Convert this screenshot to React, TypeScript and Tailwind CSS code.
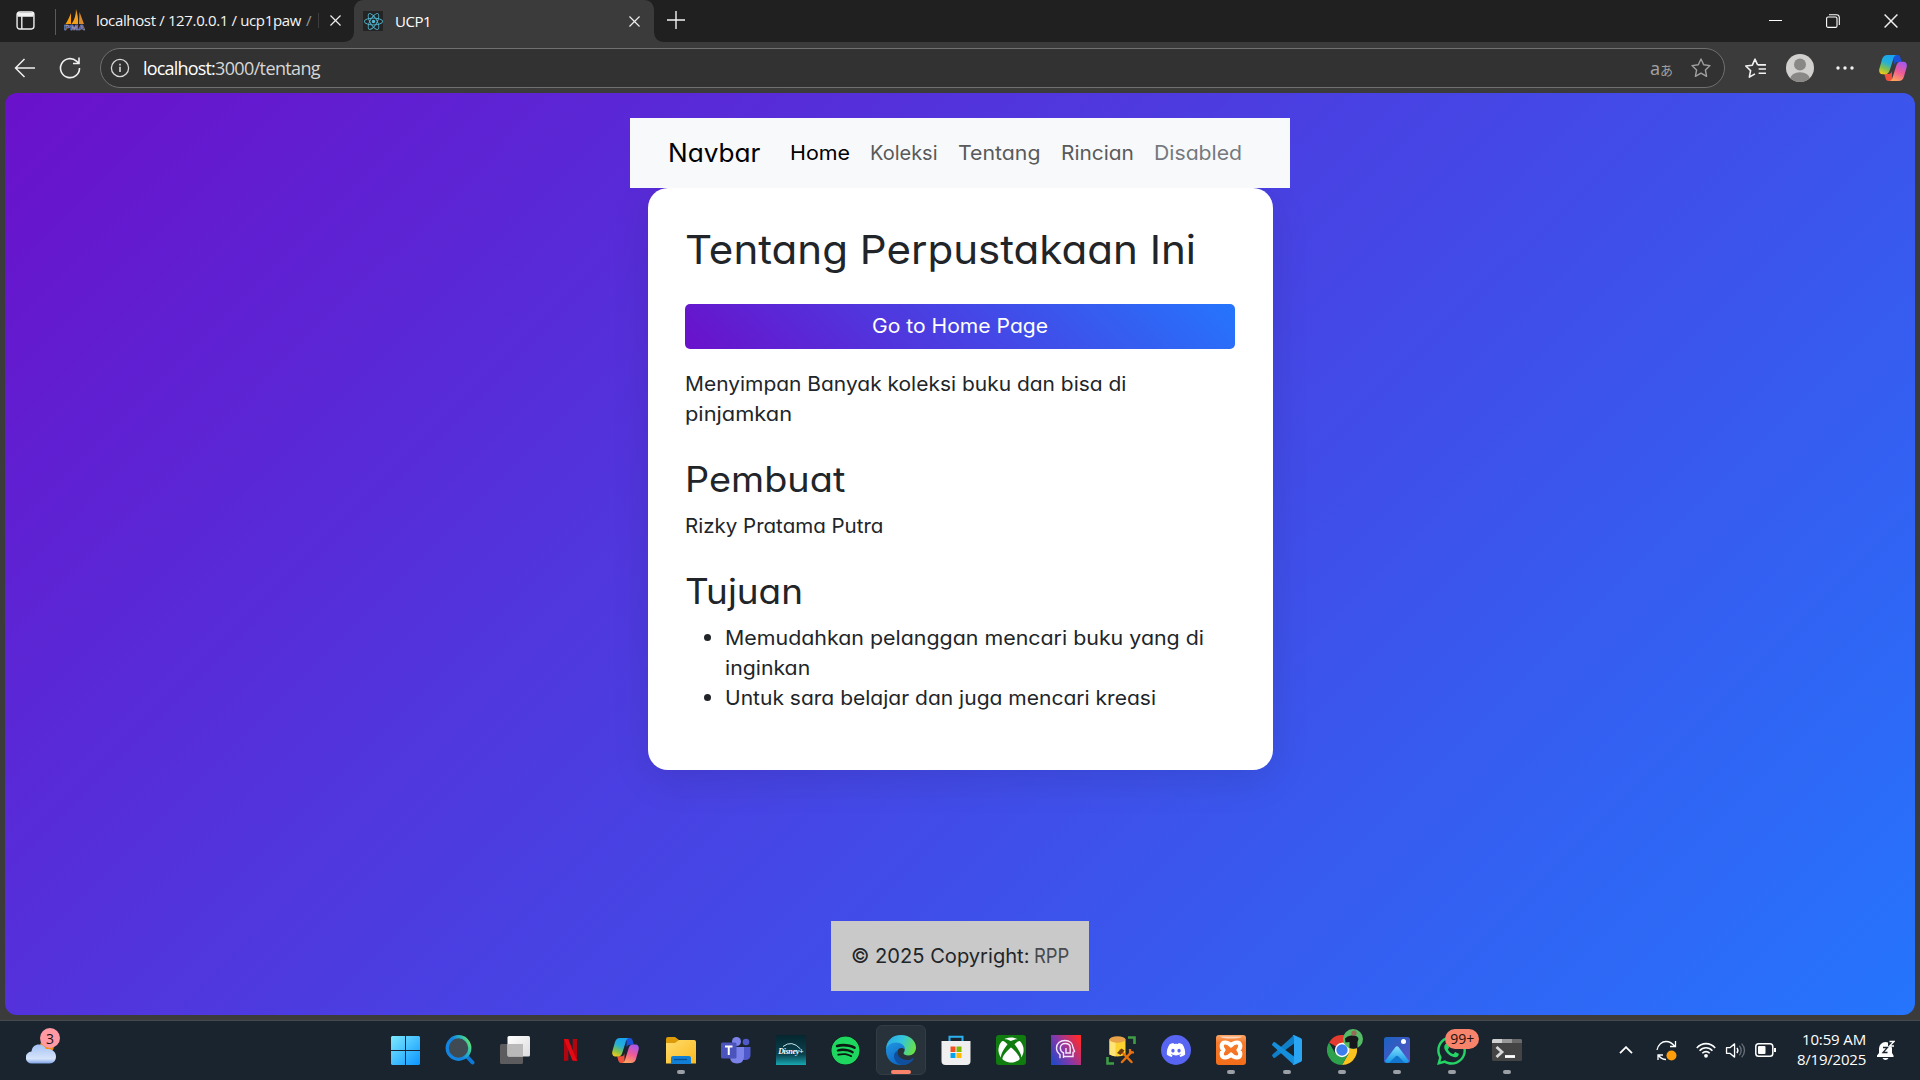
import { useLayoutEffect, useRef, useState } from "react";
import type { ReactNode } from "react";
import { FaDiscord, FaReact, FaSpotify, FaWhatsapp, FaXbox } from "react-icons/fa";

/* One line of text, tracked so that it fills exactly `width` pixels. */
function Line({ width, className = "", children }: { width: number; className?: string; children: string }) {
  const ref = useRef<HTMLSpanElement>(null);
  const [tracking, setTracking] = useState(0);
  useLayoutEffect(() => {
    if (!ref.current) return;
    const natural = ref.current.getBoundingClientRect().width - tracking * children.length;
    setTracking((width - natural) / children.length);
  }, [width, children]);
  return (
    <span ref={ref} style={{ letterSpacing: tracking }} className={`inline-block whitespace-pre ${className}`}>
      {children}
    </span>
  );
}

/* One line of page text, its letters widened so that it fills exactly `width` pixels. */
function Wide({ width, className = "", children }: { width: number; className?: string; children: string }) {
  const ref = useRef<HTMLSpanElement>(null);
  const [scale, setScale] = useState(1);
  useLayoutEffect(() => {
    if (ref.current) setScale(width / ref.current.offsetWidth);
  }, [width, children]);
  return (
    <span style={{ width }} className={`inline-block text-left whitespace-pre ${className}`}>
      <span ref={ref} style={{ transform: `scaleX(${scale})` }} className="inline-block origin-left">
        {children}
      </span>
    </span>
  );
}

function Copilot({ id, className }: { id: string; className: string }) {
  return (
    <svg viewBox="0 0 28 26" className={className}>
      <defs>
        <linearGradient id={`${id}a`} x1="0.6" y1="0" x2="0.2" y2="1">
          <stop offset="0" stopColor="#18a3f0" />
          <stop offset="0.4" stopColor="#25b0d8" />
          <stop offset="0.7" stopColor="#7ec052" />
          <stop offset="1" stopColor="#f4cb16" />
        </linearGradient>
        <linearGradient id={`${id}b`} x1="0.7" y1="0" x2="0.3" y2="1">
          <stop offset="0" stopColor="#a558ee" />
          <stop offset="0.5" stopColor="#ef5a96" />
          <stop offset="1" stopColor="#ffa45c" />
        </linearGradient>
      </defs>
      <path d="M15 0h3.500c2 0 2.700 1.600 3.200 3.500l1 3.500h-4c-2 0-3 1-3.600 3z" fill="#1b50d8" />
      <path d="M13 26H9.500c-2 0-2.700-1.600-3.200-3.500l-1-3.500h4c2 0 3-1 3.600-3z" fill="#f0503c" />
      <path d="M8.500 0h9c-2 .5-2.600 2-3.200 4l-3.500 11c-.8 2.700-2 4.200-4.600 4.200H3.600C1 19.200-.3 17 .3 14L3 4.500C3.900 1.500 5.500 0 8.500 0z" fill={`url(#${id}a)`} />
      <path d="M19.500 26h-9c2-.5 2.600-2 3.200-4l3.500-11c.8-2.700 2-4.200 4.600-4.200h2.600c2.600 0 3.900 2.200 3.300 5.200L25 21.500c-.9 3-2.500 4.500-5.500 4.500z" fill={`url(#${id}b)`} />
    </svg>
  );
}

const Close = ({ className }: { className: string }) => (
  <svg viewBox="0 0 12 12" className={className} fill="none" stroke="#eee" strokeWidth="1.3">
    <path d="M.5.5l11 11M11.500.5L.5 11.500" />
  </svg>
);

const STAR = "M11 2l2.700 5.800 6.300.8-4.600 4.400 1.200 6.300L11 16.200 5.400 19.300l1.200-6.300L2 8.600l6.300-.8z";

function TabStrip() {
  return (
    <div className="flex h-[42px] items-start bg-[#202020]">
      <div className="flex h-10 w-[55px] items-center justify-center pr-[5px]">
        <svg viewBox="0 0 18 18" className="size-[19px]" fill="none" stroke="#f2f2f2" strokeWidth="1.3">
          <rect x="1" y="1" width="16" height="16" rx="2.500" />
          <path d="M1 2.800h16M1.500 4.400h15" strokeWidth="2.200" />
          <path d="M5.500 5v12" />
        </svg>
      </div>
      <div className="mt-[9px] h-[26px] w-px bg-[#5a5a5a]" />
      <div className="flex h-10 w-[298px] items-center pl-2">
        <svg viewBox="0 0 21 22" className="h-[22px] w-[21px]">
          <path d="M7 4C5.500 8 4 11 1.500 15H7z" fill="#f89c0e" />
          <path d="M12 0C12 6 10.500 11 7.500 15H14C14.500 10 13.500 5 12 0z" fill="#f5a01c" />
          <path d="M15.500 3c1.500 4 3 8 4.500 12h-5z" fill="#d98a2c" />
          <text x="0" y="21" fontSize="8" textLength="21" lengthAdjust="spacingAndGlyphs" fontWeight="700" fill="#24285c" stroke="#a5a8d8" strokeWidth=".5" fontFamily="Liberation Sans">PMA</text>
        </svg>
        <div className="ml-[11px] flex w-[234px] text-[15px] text-[#f4f4f4]">
          <Line width={205}>localhost / 127.0.0.1 / ucp1paw</Line>
          <span className="ml-[5px] text-[#999]">/</span>
          <span className="mt-1 ml-[6px] h-[15px] w-px bg-[#3c3c3c]" />
        </div>
        <Close className="size-[11px] shrink-0" />
      </div>
      <div className="relative flex h-[42px] w-[301px] items-center">
        <svg viewBox="0 0 321 42" className="absolute -left-[11px] top-0 h-[42px] w-[321px] max-w-none">
          <path d="M0 42c7 0 11-4 11-11V10C11 4 15 0 21 0h280c6 0 10 4 10 10v21c0 7 4 11 10 11z" fill="#3b3b3b" />
        </svg>
        <div className="relative flex h-10 w-full items-center pl-[9px]">
          <span className="flex size-5 items-center justify-center bg-[#242424]">
            <FaReact className="size-[19px] text-[#52bad5]" />
          </span>
          <span className="ml-3 w-[234px] text-[15px] text-white">
            <Line width={36}>UCP1</Line>
          </span>
          <Close className="size-[11px] shrink-0" />
        </div>
      </div>
      <svg viewBox="0 0 18 18" className="ml-[12px] mt-[11px] size-[18px]" stroke="#f2f2f2" strokeWidth="1.4">
        <path d="M9 0v18M0 9h18" />
      </svg>
      <div className="mt-[13px] ml-auto flex items-center gap-[44px] pr-[22px]">
        <svg viewBox="0 0 13 15" className="h-[15px] w-[13px]" stroke="#fff"><path d="M0 7.500h13" /></svg>
        <svg viewBox="0 0 14 14" className="size-[14px]" fill="none" stroke="#fff" strokeWidth="1.100">
          <rect x=".6" y="3" width="10.400" height="10.400" rx="1.500" />
          <path d="M3 .7h7.500c1.800 0 2.800 1 2.800 2.800V11" />
        </svg>
        <Close className="size-[14px]" />
      </div>
    </div>
  );
}

function AddressBar() {
  return (
    <div className="flex h-[51px] items-start pt-[6px]">
      <div className="flex h-10 w-[100px] items-center pl-[14px]">
        <svg viewBox="0 0 22 20" className="h-5 w-[22px]" fill="none" stroke="#f0f0f0" strokeWidth="1.500">
          <path d="M21 10H2M10.500 1L1.500 10l9 9" />
        </svg>
        <svg viewBox="0 0 22 22" className="ml-[23px] size-[22px]" fill="none" stroke="#f0f0f0" strokeWidth="1.600">
          <path d="M20.500 11A9.500 9.500 0 1 1 17.500 4.200L19.500 6M20 .5V6.500H14" />
        </svg>
      </div>
      <div className="flex h-10 w-[1625px] items-center rounded-full border border-[#707070] bg-[#323232] pl-[9px]">
        <svg viewBox="0 0 20 20" className="size-5" fill="none" stroke="#d8d8d8" strokeWidth="1.300">
          <circle cx="10" cy="10" r="8.600" />
          <path d="M10 8.800v5.200M10 5.800v1.600" strokeWidth="1.600" />
        </svg>
        <div className="ml-[13px] flex text-[18px] text-[#d6d6d6]">
          <Line width={72} className="text-white">localhost:</Line>
          <Line width={105}>3000/tentang</Line>
        </div>
        <span className="ml-auto font-['Noto_Sans','Noto_Sans_CJK_JP',sans-serif] text-[#a0a0a0]">
          <span className="text-[18px]">a</span><span className="text-[13px]">あ</span>
        </span>
        <svg viewBox="0 0 22 22" className="mr-[12px] ml-[17px] size-[22px]" fill="none" stroke="#a0a0a0" strokeWidth="1.400" strokeLinejoin="round">
          <path d={STAR} />
        </svg>
      </div>
      <div className="flex h-10 items-center">
        <svg viewBox="0 0 22 22" className="ml-[19px] size-[23px]" fill="none" stroke="#f2f2f2" strokeWidth="1.500" strokeLinejoin="round">
          <path d="M13 7.500L10.500 2 8 7.800 1.700 8.600l4.600 4.400-1.200 6.300 5.400-3.100M13 7.500h8M14 11.500h7M14 15.500h7" />
        </svg>
        <svg viewBox="0 0 28 28" className="ml-[19px] size-7">
          <defs><clipPath id="avatar"><circle cx="14" cy="14" r="14" /></clipPath></defs>
          <g clipPath="url(#avatar)">
            <path d="M0 0h28v28H0z" fill="#d2d0ce" />
            <circle cx="14" cy="10.500" r="6" fill="#8a8886" />
            <ellipse cx="14" cy="25" rx="10" ry="6.800" fill="#8a8886" />
          </g>
        </svg>
        <svg viewBox="0 0 18 4" className="ml-[22px] h-1 w-[18px]" fill="#f2f2f2">
          <circle cx="2" cy="2" r="1.700" /><circle cx="9" cy="2" r="1.700" /><circle cx="16" cy="2" r="1.700" />
        </svg>
        <Copilot id="edge" className="ml-[25px] h-[26px] w-7" />
      </div>
    </div>
  );
}

function WebPage() {
  return (
    <div className="mx-[5px] flex h-[922px] flex-col items-center rounded-xl bg-[linear-gradient(135deg,#6a11cb,#2575fc)] pt-[25px] font-[Inter,sans-serif] text-[20px] leading-[30px] text-[#212529] [font-feature-settings:'cv11']">
      <nav className="relative flex h-[70px] w-[660px] items-center bg-[#f8f9fa] pl-[38px] text-[#595a5b]">
        <Wide width={92} className="mr-[30px] text-[25px] text-black">Navbar</Wide>
        <div className="flex gap-[20px]">
          <Wide width={60} className="text-black">Home</Wide>
          <Wide width={68}>Koleksi</Wide>
          <Wide width={83}>Tentang</Wide>
          <Wide width={73}>Rincian</Wide>
          <Wide width={88} className="text-[#75797e]">Disabled</Wide>
        </div>
      </nav>
      <main className="h-[582px] w-[625px] rounded-[20px] bg-white px-[37px] pt-[38px] shadow-[0_10px_38px_rgba(0,0,0,0.1)]">
        <h2 className="text-[40px] leading-[48px]"><Wide width={511}>Tentang Perpustakaan Ini</Wide></h2>
        <button className="mt-[30px] flex h-[45px] w-[550px] items-center justify-center rounded-[5px] bg-[linear-gradient(45deg,#6a11cb,#2575fc)] pb-px text-white">
          <Wide width={176}>Go to Home Page</Wide>
        </button>
        <p className="mt-5">
          <Wide width={441}>Menyimpan Banyak koleksi buku dan bisa di</Wide>
          <br />
          <Wide width={107}>pinjamkan</Wide>
        </p>
        <h3 className="mt-[29px] text-[35px] leading-[42px]"><Wide width={160}>Pembuat</Wide></h3>
        <p className="mt-[11px]"><Wide width={198}>Rizky Pratama Putra</Wide></p>
        <h3 className="mt-[29px] text-[35px] leading-[42px]"><Wide width={118}>Tujuan</Wide></h3>
        <ul className="mt-[11px] pl-10">
          <li className="flex">
            <span className="-ml-[21px] mt-[11px] mr-[14px] size-[7px] rounded-full bg-[#212529]" />
            <span>
              <Wide width={479}>Memudahkan pelanggan mencari buku yang di</Wide>
              <br />
              <Wide width={85}>inginkan</Wide>
            </span>
          </li>
          <li className="flex">
            <span className="-ml-[21px] mt-[11px] mr-[14px] size-[7px] rounded-full bg-[#212529]" />
            <Wide width={431}>Untuk sara belajar dan juga mencari kreasi</Wide>
          </li>
        </ul>
      </main>
      <footer className="mt-[151px] flex h-[70px] w-[258px] items-center bg-[#c9c9c9] pl-5">
        <Wide width={178}>© 2025 Copyright:</Wide>
        <Wide width={35} className="ml-[5px] text-[#474b4f]">RPP</Wide>
      </footer>
    </div>
  );
}

const WindowsLogo = () => (
  <svg viewBox="0 0 29 29" className="size-[29px]">
    <defs><linearGradient id="win" x1="0" y1="0" x2="1" y2="1"><stop stopColor="#7eeaff" /><stop offset="1" stopColor="#0a95ff" /></linearGradient></defs>
    <path d="M1 0h13v14H0V1zM15 0h13l1 1v13H15zM0 15h14v14H1l-1-1zM15 15h14v13l-1 1H15z" fill="url(#win)" />
  </svg>
);

const SearchLogo = () => (
  <svg viewBox="0 0 30 30" className="size-[30px]" fill="none">
    <defs><linearGradient id="sea" x1="0" y1=".7" x2="1" y2=".2"><stop offset=".45" stopColor="#1385e0" /><stop offset=".75" stopColor="#2cb9b8" /><stop offset="1" stopColor="#61e56e" /></linearGradient></defs>
    <path d="M21 20.500l6.500 7" stroke="#0d79d6" strokeWidth="4" strokeLinecap="round" />
    <circle cx="13.500" cy="13" r="11.300" fill="#3f4a53" stroke="url(#sea)" strokeWidth="3.200" />
  </svg>
);

const TaskView = () => (
  <svg viewBox="0 0 30 28" className="h-7 w-[30px]">
    <defs><linearGradient id="tv" x1="0" y1="0" x2="1" y2="1"><stop stopColor="#fff" /><stop offset="1" stopColor="#dcdcdc" /></linearGradient></defs>
    <rect y="8" width="23" height="20" rx="1.500" fill="#5c5c5e" />
    <rect x="7.500" width="22.500" height="20.500" rx="1.500" fill="url(#tv)" />
    <path d="M7.500 8H23v12.500H9q-1.500 0-1.500-1.500z" fill="#b9b9b9" />
  </svg>
);

const Netflix = () => (
  <svg viewBox="0 0 13 22" className="h-[22px] w-[13px]">
    <path d="M0 0h4.300v21.500L0 22zM8.700 0H13v22l-4.300-.5z" fill="#b1060f" />
    <path d="M0 0h4.300L13 22l-4.600-.5z" fill="#e50914" />
  </svg>
);

const Explorer = () => (
  <svg viewBox="0 0 30 27" className="h-[27px] w-[30px]">
    <defs><linearGradient id="fol" x1="0" y1="0" x2="1" y2="1"><stop stopColor="#ffdc6b" /><stop offset="1" stopColor="#fbb91f" /></linearGradient></defs>
    <path d="M0 2q0-2 2-2h7l4 3h13q2 0 2 2v6H0z" fill="#dd9a09" />
    <path d="M0 6h9l4-3h15q2 0 2 2v21.500H0z" fill="url(#fol)" />
    <path d="M5 27v-6q0-2 2-2h16q2 0 2 2v6z" fill="#127fd6" />
    <path d="M8 22.500h13" stroke="#0b4f93" strokeWidth="1.300" />
  </svg>
);

const Teams = () => (
  <svg viewBox="0 0 30 27" className="h-[27px] w-[30px]">
    <circle cx="25" cy="5" r="3.300" fill="#5059c9" /><circle cx="15.500" cy="4.500" r="4.500" fill="#7b83eb" />
    <path d="M20 10h9.500v8q0 5-5.500 5h-3z" fill="#5059c9" />
    <path d="M9 10h14v9q0 7.500-7 7.500t-7-7z" fill="#7b83eb" />
    <rect y="5.500" width="15.500" height="16" rx="1.500" fill="#4b53bc" />
    <path d="M4 9.500h7.500M7.750 9.500v8.500" stroke="#fff" strokeWidth="2" />
  </svg>
);

const Disney = () => (
  <span className="relative flex size-[30px] items-center justify-center bg-linear-to-b from-[#06262f] via-[#0a4350] via-65% to-[#16a9b2]">
    <svg viewBox="0 0 30 30" className="absolute inset-0 size-[30px]" fill="none">
      <path d="M7 11.500Q16 4.500 24.500 14" stroke="#c8e8ee" strokeWidth="1" />
    </svg>
    <span className="relative mt-[3px] font-['Liberation_Serif',serif] text-[8px] leading-[10px] font-bold tracking-[-0.3px] text-white italic">Disney+</span>
  </span>
);

const Edge = () => (
  <svg viewBox="0 0 30 30" className="size-[30px]">
    <defs>
      <linearGradient id="ed1" x1="0" y1=".2" x2="1" y2=".5"><stop stopColor="#2aa9e8" /><stop offset=".5" stopColor="#33c4dd" /><stop offset="1" stopColor="#67e04a" /></linearGradient>
      <linearGradient id="ed2" x1="0" y1="0" x2=".6" y2="1"><stop stopColor="#2195e0" /><stop offset="1" stopColor="#0c66c4" /></linearGradient>
    </defs>
    <path d="M0 15C0 6 6 0 15 0s15 6 15 12.500c0 5-3.500 8-7.500 8-3 0-5-1-5-2.200 0-.8 1.200-1.300 1.200-3.500 0-3-3-5.300-6.700-5.300C6 9.500 1.500 12 0 15z" fill="url(#ed1)" />
    <path d="M0 15.500C.5 11 5 7.500 10.500 7.500c4.500 0 8.500 3 8.500 7-3-3-8-1.500-8 3.500 0 6 6 10 12 10-2 1.300-5 2-8 2C6 30 0 24 0 15.500z" fill="url(#ed2)" />
    <path d="M12 15.500c-1.500 6 4 9.500 9 9.500 3 0 4.500-1 6-1.800.6-.2 1 .2.700.7C25.500 27.500 21 30 17 30c-5 0-9-4.500-9-9 0-2.700 1.700-4.500 4-5.500z" fill="#0f4f9d" />
  </svg>
);

const Store = () => (
  <svg viewBox="0 0 29 30" className="size-[30px]">
    <path d="M8 8V1.800h13V8" fill="none" stroke="#2cb1ee" strokeWidth="2" />
    <path d="M0 6h29v20q0 4-4 4H4q-4 0-4-4z" fill="#efefef" />
    <path d="M9 11.500h5v5.500H9z" fill="#f25022" /><path d="M15 11.500h5v5.500h-5z" fill="#7fba00" />
    <path d="M9 18h5v5H9z" fill="#00a4ef" /><path d="M15 18h5v5h-5z" fill="#ffb900" />
  </svg>
);

const Xbox = () => (
  <span className="flex size-[30px] items-center justify-center rounded-[3px] bg-[#107c10]">
    <FaXbox className="size-[26px] text-white" />
  </span>
);

const HeadApp = () => (
  <svg viewBox="0 0 30 30" className="size-[30px]">
    <defs><linearGradient id="hd" x1="0" y1=".8" x2="1" y2=".2"><stop stopColor="#2448c8" /><stop offset=".45" stopColor="#8a37a6" /><stop offset="1" stopColor="#ff2a2e" /></linearGradient></defs>
    <path d="M0 0h30v30H0z" fill="url(#hd)" />
    <g fill="none" stroke="#f3e8fb" strokeWidth="1.400">
      <path d="M9 23.300v-3.800C6.700 17.800 5.500 15.500 5.500 13c0-4.500 3.700-7.500 8.500-7.500s7.800 3 8 7l1.500 4-1.500.8v4.200H13" />
      <path d="M12.500 23v-5c-2-1-3.200-2.700-3.200-5 0-2.700 2-4.500 5-4.500s4.900 1.800 4.900 4.300V18h-4.200v-5" />
    </g>
  </svg>
);

const DbTools = () => (
  <svg viewBox="0 0 30 29" className="h-[29px] w-[30px]">
    <path d="M22 1.500h6.500V8M1.500 21v6.500H8" fill="none" stroke="#3f9d45" strokeWidth="2.600" />
    <path d="M3.500 3.500v15q8 4 16 0v-15z" fill="#fbd22f" /><path d="M3.500 3.500v15q3 1.500 6 2v-17z" fill="#ffe477" />
    <ellipse cx="11.500" cy="3.500" rx="8" ry="3.300" fill="#e8a24a" />
    <path d="M16 26l9.500-10M14.500 14.500l11 11.500" stroke="#e8720c" strokeWidth="2.500" strokeLinecap="round" />
    <path d="M11 17l4.500-4.500 3 2-4 4.500z" fill="#6b3a10" />
    <path d="M24 13v3.500h4" fill="none" stroke="#e8720c" strokeWidth="2.200" />
  </svg>
);

const Discord = () => (
  <span className="flex size-[30px] items-center justify-center rounded-full bg-[#5865f2]">
    <FaDiscord className="size-[20px] text-white" />
  </span>
);

const Xampp = () => (
  <svg viewBox="0 0 30 30" className="size-[30px]">
    <defs><linearGradient id="xa" x1="0" y1="0" x2="0" y2="1"><stop stopColor="#f9a468" /><stop offset=".25" stopColor="#f67a2b" /><stop offset="1" stopColor="#f26d1a" /></linearGradient></defs>
    <rect width="30" height="30" rx="3" fill="url(#xa)" />
    <path d="M4 1.500h22q-2 2-11 2t-11-2z" fill="#fff" opacity=".6" />
    <path d="M9 7.500c3 0 4 .6 6 3 2-2.400 3-3 6-3 3.500 0 4.500 4.500 1.500 7.500 3 3 2 7.500-1.500 7.500-3 0-4-.6-6-3-2 2.400-3 3-6 3-3.500 0-4.500-4.500-1.500-7.500-3-3-2-7.500 1.500-7.500z" fill="none" stroke="#fff" strokeWidth="4.200" strokeLinejoin="round" />
  </svg>
);

const VsCode = () => (
  <svg viewBox="0 0 30 30" className="size-[30px]">
    <path d="M.5 19.500L22 0v8.500L3 22.700q-1 .5-1.800-.2L.3 21q-.6-.8.2-1.500z" fill="#0f7fc9" />
    <path d="M.5 10.500L22 30v-8.500L3 7.300q-1-.5-1.800.2L.3 9q-.6.800.2 1.500z" fill="#158fdc" />
    <path d="M22 0l7 3.300q1 .5 1 1.700v20q0 1.200-1 1.700L22 30q-1 0-1.500-.8.600.3 1.500-.9V1.700Q21 .5 20.500.8 21 0 22 0z" fill="#2aa5f4" />
  </svg>
);

const Chrome = () => (
  <span className="relative">
    <svg viewBox="0 0 30 30" className="size-[30px]">
      <path d="M15 15L2 7.500A15 15 0 0 1 28 7.500z" fill="#e33b2e" />
      <path d="M15 7.500h13A15 15 0 0 1 15 30l6.500-11.300z" fill="#fcc31e" />
      <path d="M15 15l6.500 3.700L15 30A15 15 0 0 1 2 7.500l6.500 11.200z" fill="#2da14c" />
      <circle cx="15" cy="15" r="7.200" fill="#fff" /><circle cx="15" cy="15" r="5.700" fill="#3b7ded" />
    </svg>
    <svg viewBox="0 0 20 20" className="absolute -top-[6px] left-4 size-5">
      <circle cx="10" cy="10" r="10" fill="#55bb66" />
      <path d="M2 9.500q2-2.500 6-3h3.500q3.500.5 4 3.500l-1 3v6q-4 1.500-8 0v-6l-4 .5z" fill="#17181c" />
      <circle cx="11" cy="4" r="2.600" fill="#9a6a58" />
    </svg>
  </span>
);

const Photos = () => (
  <svg viewBox="0 0 26 26" className="size-[26px]">
    <defs>
      <linearGradient id="ph" x1="0" y1="0" x2="1" y2="1"><stop stopColor="#1a63c0" /><stop offset="1" stopColor="#5b51c4" /></linearGradient>
      <linearGradient id="ph2" x1="0" y1="0" x2="0" y2="1"><stop stopColor="#7fe3ff" /><stop offset="1" stopColor="#1591e6" /></linearGradient>
    </defs>
    <rect width="26" height="26" rx="2.500" fill="url(#ph)" />
    <path d="M1 24L11.500 10q1.500-1.700 3 0L25 24q-1 2-2.500 2h-19Q1.500 26 1 24z" fill="url(#ph2)" />
    <path d="M5 26l6.500-6.500q1.500-1.300 3 0L21 26z" fill="#1276cf" />
    <circle cx="19.500" cy="4.500" r="2.500" fill="#fff" />
  </svg>
);

const WhatsApp = () => (
  <span className="relative">
    <FaWhatsapp className="size-[33px] text-[#25d366]" />
    <span className="absolute -top-[5px] left-[10px] flex h-5 w-[34px] items-center justify-center rounded-full bg-[#f7836a] font-['Open_Sans',sans-serif] text-[14px] text-[#24100c]">99+</span>
  </span>
);

const Terminal = () => (
  <svg viewBox="0 0 30 22" className="h-[22px] w-[30px]">
    <rect width="30" height="22" rx="1.500" fill="#444" />
    <path d="M0 4V1.500Q0 0 1.500 0H10v4z" fill="#d0d0d0" /><path d="M10 0h10v4H10z" fill="#999" /><path d="M20 0h8.500Q30 0 30 1.500V4H20z" fill="#6a6a6a" />
    <path d="M4.500 8l5.500 5-5.500 5" fill="none" stroke="#d8d8d8" strokeWidth="2.800" /><path d="M13 17.500h10" stroke="#fff" strokeWidth="2.800" />
  </svg>
);

const apps: { name: string; icon: ReactNode; state?: "open" | "active" }[] = [
  { name: "Start", icon: <WindowsLogo /> },
  { name: "Search", icon: <SearchLogo /> },
  { name: "Task view", icon: <TaskView /> },
  { name: "Netflix", icon: <Netflix /> },
  { name: "Copilot", icon: <Copilot id="task" className="h-[25px] w-[29px]" /> },
  { name: "Explorer", icon: <Explorer />, state: "open" },
  { name: "Teams", icon: <Teams /> },
  { name: "Disney", icon: <Disney /> },
  { name: "Spotify", icon: <FaSpotify className="size-[29px] rounded-full bg-[#0c1a12] text-[#1ed760]" /> },
  { name: "Edge", icon: <Edge />, state: "active" },
  { name: "Store", icon: <Store /> },
  { name: "Xbox", icon: <Xbox /> },
  { name: "Head", icon: <HeadApp /> },
  { name: "Database", icon: <DbTools /> },
  { name: "Discord", icon: <Discord /> },
  { name: "Xampp", icon: <Xampp />, state: "open" },
  { name: "VS Code", icon: <VsCode />, state: "open" },
  { name: "Chrome", icon: <Chrome />, state: "open" },
  { name: "Photos", icon: <Photos />, state: "open" },
  { name: "WhatsApp", icon: <WhatsApp />, state: "open" },
  { name: "Terminal", icon: <Terminal />, state: "open" },
];

function Taskbar() {
  return (
    <div className="flex h-[60px] items-start border-t border-[#434a50] bg-[#1a242e]">
      <div className="w-[377.5px] pt-[7px] pl-[26px]">
        <div className="relative h-11 w-9">
          <svg viewBox="0 0 30 27" className="absolute left-0 top-[9px] h-[27px] w-[30px]">
            <defs><linearGradient id="cl" x1="0" y1="0" x2="0" y2="1"><stop stopColor="#a3c1f3" /><stop offset=".75" stopColor="#d6e4fb" /><stop offset="1" stopColor="#7fa4e6" /></linearGradient></defs>
            <circle cx="21" cy="9" r="7" fill="#f28c1c" />
            <path d="M6 26.500a6 6 0 0 1-.5-12C6 10 9 7.500 13 7.500c3.500 0 6 2 7 4.500 5 -.5 10 2 10 7.500 0 4-2.500 7-6.500 7z" fill="url(#cl)" />
          </svg>
          <span className="absolute left-[14px] top-0 flex size-5 items-center justify-center rounded-full bg-[#ff99a4] text-[14px] text-[#1c1012]">3</span>
        </div>
      </div>
      <div className="flex w-[1157.5px]">
        {apps.map((app) => (
          <div key={app.name} className="flex w-[55.1px] shrink-0 justify-center pt-1">
            <div
              className={
                app.state === "active"
                  ? "relative flex size-[50px] items-center justify-center rounded-md border border-[#323c45] bg-[#28323b]"
                  : "relative flex size-[50px] items-center justify-center"
              }
            >
              {app.icon}
              {app.state === "active" && <span className="absolute bottom-0 h-1 w-5 rounded-full bg-[#f7836a]" />}
              {app.state === "open" && <span className="absolute bottom-px h-1 w-2 rounded-full bg-[#9aa0a6]" />}
            </div>
          </div>
        ))}
      </div>
      <div className="flex h-[58px] flex-1 items-center pl-[84px]">
        <svg viewBox="0 0 14 8" className="h-2 w-[14px]" fill="none" stroke="#fff" strokeWidth="1.800"><path d="M1 7.200l6-6 6 6" /></svg>
        <svg viewBox="0 0 22 21" className="ml-[23px] h-[21px] w-[22px]" fill="none" stroke="#fff" strokeWidth="1.300">
          <path d="M1 10C2 4.500 6 1.500 10 1.500c4 0 6.500 1.800 9 5M19.500 1v5.500H14M2 20v-5h5M2 15c2 2.500 4.500 4.500 8 4.500" />
          <circle cx="15.500" cy="15.500" r="5" fill="#ff9d0a" stroke="none" />
        </svg>
        <svg viewBox="0 0 20 16" className="ml-[18px] h-4 w-5" fill="none" stroke="#fff" strokeWidth="1.600">
          <path d="M.8 6C6 .2 14 .2 19.200 6M3.600 8.700c3.600-4 9.200-4 12.800 0M6.300 11.300c2.200-2.300 5.200-2.300 7.400 0" />
          <circle cx="10" cy="13.800" r="1.900" fill="#fff" stroke="none" />
        </svg>
        <svg viewBox="0 0 21 18" className="ml-[9px] h-[17px] w-[21px]" fill="none" stroke="#fff" strokeWidth="1.400" strokeLinejoin="round">
          <path d="M1 6h3.500L9.500 2v14l-5-4H1zM12 6.300c1.300 1.600 1.300 3.800 0 5.400" />
          <path d="M14.500 4c2.700 2.900 2.700 7.100 0 10M17 1.700c4 4.200 4 10.400 0 14.600" stroke="#68717a" />
        </svg>
        <svg viewBox="0 0 21 14" className="ml-[9px] h-[14px] w-[21px]" fill="none" stroke="#fff" strokeWidth="1.500">
          <rect x=".8" y=".8" width="17" height="12.400" rx="2.800" /><path d="M20 5v4" strokeWidth="2" />
          <rect x="3" y="3" width="7.500" height="8" rx="1" fill="#fff" stroke="none" />
        </svg>
        <div className="-mt-[2px] ml-auto flex flex-col items-end text-[15px] leading-5 text-white">
          <Line width={64}>10:59 AM</Line>
          <Line width={69}>8/19/2025</Line>
        </div>
        <svg viewBox="0 0 18 20" className="mr-[25px] ml-[11px] h-5 w-[18px]">
          <path d="M2 8.500a6.500 6.500 0 0 1 13 0V13l1.500 2.500V17H0v-1.500L2 13zM5.500 18h6q-1 2-3 2t-3-2z" fill="#fff" />
          <path d="M6 7.500h4.500L6 12.500h4.500" fill="none" stroke="#1a242e" strokeWidth="1.300" />
          <path d="M11 .5h7v6h-7z" fill="#1a242e" /><path d="M12.500 1.500H17l-4.500 4.500H17" fill="none" stroke="#fff" strokeWidth="1.300" />
        </svg>
      </div>
    </div>
  );
}

export default function App() {
  return (
    <div className="flex h-[1080px] w-[1920px] flex-col overflow-hidden bg-[#3b3b3b] font-['Open_Sans','Noto_Sans',sans-serif]">
      <TabStrip />
      <AddressBar />
      <WebPage />
      <div className="h-[5px]" />
      <Taskbar />
    </div>
  );
}
